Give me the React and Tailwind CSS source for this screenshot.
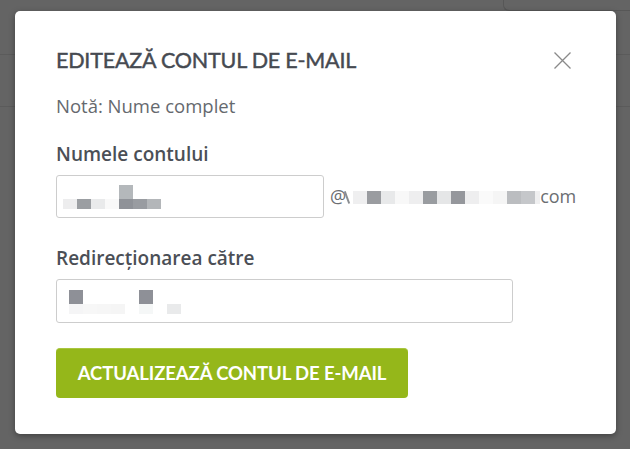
const accountBlocks = ["#ededee", "#9b9ea2", "#e9eaeb", "#f9f9f9", "#8f9298", "#999ca1", "#b3b6b9"];
const domainBlocks = ["#efeff0", "#9a9ca0", "#e8e9ea", "#f8f8f8", "#eeeeef", "#999ca0", "#e5e6e7", "#95979c", "#eeeeef", "#fafafa", "#f5f5f5", "#bbbdc0", "#c5c7ca"];
const forwardBlocks = ["#f5f5f6", "#f7f7f7", "#f6f6f6", "#f5f5f5", null, "#f5f7f7", null, "#e9eaeb"];

function Pixelated({ top, bottom }) {
    return (
        <div className="flex flex-col">
            <div className="flex h-[14px]">
                {bottom.map((_, i) => (
                    <div key={i} className="w-[14px]" style={{ background: top[i] || "transparent" }} />
                ))}
            </div>
            <div className="flex h-[10px]">
                {bottom.map((c, i) => (
                    <div key={i} className="w-[14px]" style={{ background: c || "transparent" }} />
                ))}
            </div>
        </div>
    );
}

export default function App() {
    return (
        <div className="relative w-[630px] h-[449px] overflow-hidden bg-[#646464] font-['Open_Sans',sans-serif]">
            {/* page behind the backdrop */}
            <div className="flex justify-end h-[55px] border-b border-[#5b5b5b]">
                <div className="w-[127px] h-[11px] border-l border-b border-[#575757] rounded-bl-[6px]" />
            </div>
            <div className="h-[52px] border-b border-[#5b5b5b]" />

            {/* dialog */}
            <div className="absolute left-[15px] top-[11px] w-[601px] h-[423px] bg-white rounded-[5px] shadow-[0_2px_6px_rgba(0,0,0,0.35)] pl-[41px] pt-[34px]">
                <div className="flex items-center justify-between pr-[44px] h-[30px]">
                    <h2 className="font-['Lato',sans-serif] text-[21.5px] leading-[30px] text-[#464a51] tracking-[-0.2px] [-webkit-text-stroke:0.45px_#464a51]">
                        EDITEAZĂ CONTUL DE E-MAIL
                    </h2>
                    <svg width="17" height="17" viewBox="0 0 17 17" className="mr-[1px]">
                        <path d="M0.5 0.5 L16.5 16.5 M16.5 0.5 L0.5 16.5" stroke="#8a8a8a" strokeWidth="1.3" fill="none" />
                    </svg>
                </div>

                <p className="mt-[19px] text-[18.5px] leading-[24px] text-[#65696e]">Notă: Nume complet</p>

                <label className="block mt-[23px] text-[19px] leading-[26px] font-semibold text-[#4b4f56]">Numele contului</label>
                <div className="mt-[8px] flex items-center">
                    <div className="w-[268px] h-[43px] border border-[#cdcdcd] rounded-[3px] flex items-end pl-[6px] pb-[8px]">
                        <Pixelated top={[null, null, null, null, "#b4b8bb", null, null]} bottom={accountBlocks} />
                    </div>
                    <div className="ml-[6px] flex items-center text-[18px] text-[#6b6e72]">
                        <span>@</span>
                        <div className="w-[7px] h-[13px] mt-[2px] flex justify-start">
                            <div className="w-[1.5px] h-[13px] bg-[#8a8d91] -rotate-[20deg]" />
                        </div>
                        <div className="flex h-[13px] mt-[2px]">
                            {domainBlocks.map((c, i) => (
                                <div key={i} className="w-[14px]" style={{ background: c }} />
                            ))}
                            <div className="w-[5px] bg-[#efeff0]" />
                        </div>
                        <span>com</span>
                    </div>
                </div>

                <label className="block mt-[27px] text-[19px] leading-[26px] font-semibold text-[#4b4f56]">Redirecționarea către</label>
                <div className="mt-[8px] w-[457px] h-[44px] border border-[#cdcdcd] rounded-[3px] flex items-start pl-[12px] pt-[10px]">
                    <Pixelated top={["#8e9097", null, null, null, null, "#8e9097", null, null]} bottom={forwardBlocks} />
                </div>

                <button className="mt-[25px] w-[352px] h-[50px] rounded-[4px] bg-[#95b71a] border-t border-[#a9c63f] text-white font-['Lato',sans-serif] font-bold text-[18.5px] tracking-[-0.1px]">
                    ACTUALIZEAZĂ CONTUL DE E-MAIL
                </button>
            </div>
        </div>
    );
}
